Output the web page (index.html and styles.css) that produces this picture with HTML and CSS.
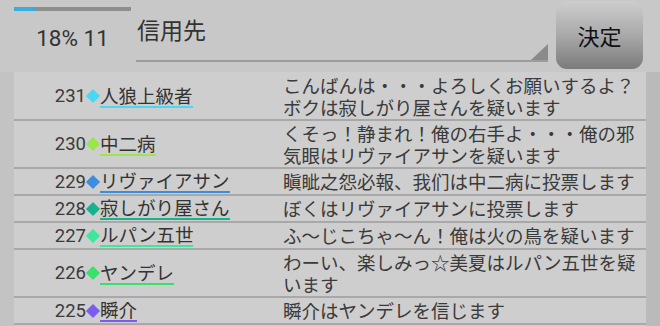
FILE: index.html
```html
<!DOCTYPE html>
<html lang="ja">
<head>
  <meta charset="UTF-8" />
  <meta name="viewport" content="width=device-width, initial-scale=1.0"/>
  <title>Vote</title>
  <link rel="stylesheet" href="styles.css">
</head>
<body>
  <div class="top">
    <div class="stat">
      <div class="progress"><div class="progress-fill" style="width:18%"></div></div>
      <div class="count">18% 11</div>
    </div>
    <div class="spinner"><span>信用先</span></div>
    <button class="decide">決定</button>
  </div>

  <div class="main">
    <div class="log">
      <div class="row">
        <div class="who"><span class="no">231</span><span class="mark cyan"></span><span class="name cyan">人狼上級者</span></div>
        <div class="msg">こんばんは・・・よろしくお願いするよ？ボクは寂しがり屋さんを疑います</div>
      </div>
      <div class="row">
        <div class="who"><span class="no">230</span><span class="mark lime"></span><span class="name lime">中二病</span></div>
        <div class="msg">くそっ！静まれ！俺の右手よ・・・俺の邪気眼はリヴァイアサンを疑います</div>
      </div>
      <div class="row">
        <div class="who"><span class="no">229</span><span class="mark blue"></span><span class="name blue">リヴァイアサン</span></div>
        <div class="msg">瞋眦之怨必報、我们は中二病に投票します</div>
      </div>
      <div class="row">
        <div class="who"><span class="no">228</span><span class="mark teal"></span><span class="name teal">寂しがり屋さん</span></div>
        <div class="msg">ぼくはリヴァイアサンに投票します</div>
      </div>
      <div class="row">
        <div class="who"><span class="no">227</span><span class="mark mint"></span><span class="name mint">ルパン五世</span></div>
        <div class="msg">ふ～じこちゃ～ん！俺は火の鳥を疑います</div>
      </div>
      <div class="row">
        <div class="who"><span class="no">226</span><span class="mark green"></span><span class="name green">ヤンデレ</span></div>
        <div class="msg">わーい、楽しみっ☆美夏はルパン五世を疑います</div>
      </div>
      <div class="row">
        <div class="who"><span class="no">225</span><span class="mark purple"></span><span class="name purple">瞬介</span></div>
        <div class="msg">瞬介はヤンデレを信じます</div>
      </div>
    </div>
  </div>
</body>
</html>
```

FILE: styles.css
```css
body {
  margin: 0;
  height: 326px;
  overflow: hidden;
  background: #c8c8c8;
  font-family: "Roboto", "Noto Sans CJK JP", sans-serif;
  color: #3a3a3a;
}

.top {
  display: flex;
  height: 72px;
}

.stat {
  width: 117px;
  margin-left: 14px;
}

.progress {
  margin-top: 7px;
  height: 4px;
  background: #8e8e8e;
}

.progress-fill {
  height: 100%;
  background: #38ade0;
}

.count {
  margin-top: 12px;
  text-align: center;
  font-size: 22.5px;
  line-height: 30px;
  color: #333;
}

.spinner {
  position: relative;
  width: 412px;
  height: 60px;
  margin-left: 5px;
  border-bottom: 2px solid #9c9c9c;
  font-size: 23px;
  line-height: 30px;
  color: #333;
}

.spinner span {
  display: block;
  padding: 17px 0 0 1px;
}

.spinner::after {
  content: "";
  position: absolute;
  right: 0;
  bottom: 0;
  border-left: 17px solid transparent;
  border-bottom: 16px solid #8a8a8a;
}

.decide {
  width: 87px;
  height: 68px;
  margin: 1px 0 0 8px;
  border: none;
  border-radius: 11px;
  background: linear-gradient(to bottom, #cdcdcd, #a9a9a9 50%, #7b7b7b);
  font-family: "Noto Sans CJK JP", sans-serif;
  font-size: 22px;
  color: #111;
  padding: 0;
}

.main {
  display: flex;
  height: 254px;
  background: linear-gradient(to right, #c3c3c3, #bababa);
}

.log {
  width: 632px;
  margin-left: 14px;
  padding-top: 1px;
  background: #cecece;
}

.row {
  display: flex;
  padding: 1px 0;
  border-bottom: 2px solid #a8a8a8;
  font-size: 18.5px;
  line-height: 22px;
}

.who {
  display: flex;
  align-items: center;
  width: 269px;
  flex-shrink: 0;
}

.no {
  width: 72px;
  text-align: right;
}

.mark {
  width: 14px;
  height: 14px;
  position: relative;
}

.mark::before {
  content: "";
  position: absolute;
  left: 2px;
  top: 2px;
  width: 10px;
  height: 10px;
  background: currentColor;
  transform: rotate(45deg);
}

.name {
  line-height: 21px;
  border-bottom: 2px solid currentColor;
  -webkit-text-fill-color: #333;
}

.name, .msg {
  font-family: "Noto Sans CJK JP", sans-serif;
}

.msg {
  width: 363px;
}

.cyan { color: #4ad7f2; }
.lime { color: #9be64c; }
.blue { color: #3a8de0; }
.teal { color: #17b38e; }
.mint { color: #3ce89b; }
.green { color: #3bdf6c; }
.purple { color: #7b5cf0; }
```
